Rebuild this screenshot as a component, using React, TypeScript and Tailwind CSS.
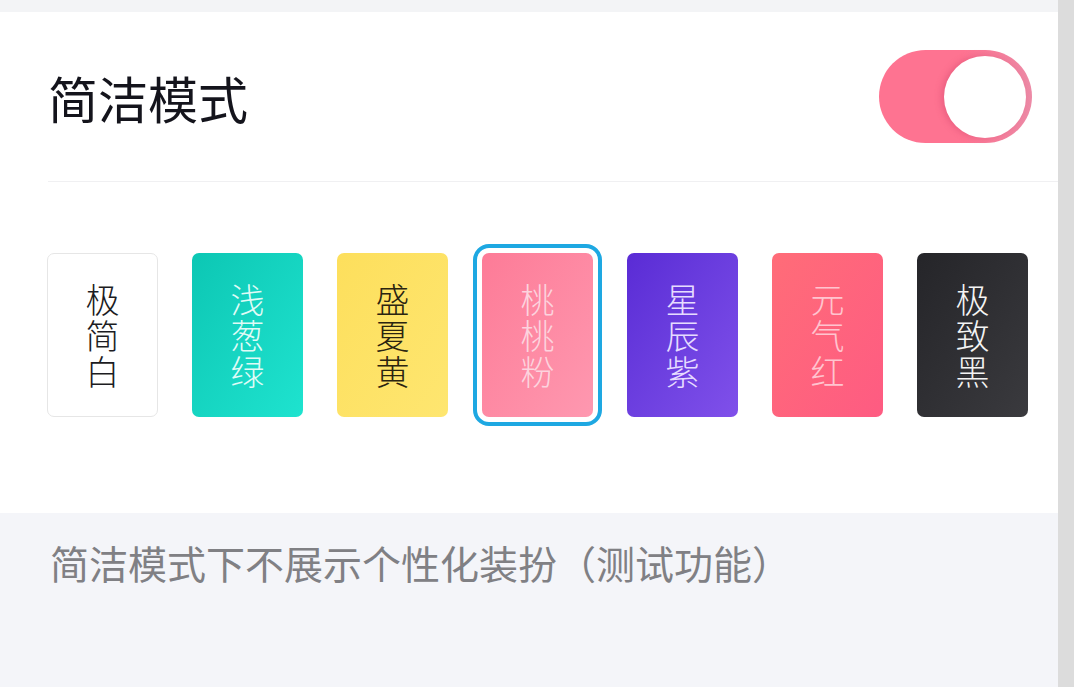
const themes = [
  { name: '极简白', card: 'bg-white border border-[#e6e6e6]', text: 'text-[#1c1c22]' },
  { name: '浅葱绿', card: 'bg-gradient-to-br from-[#0cc7b4] to-[#1ee3cf]', text: 'text-[#dffbf6]' },
  { name: '盛夏黄', card: 'bg-gradient-to-br from-[#fddf5c] to-[#fee670]', text: 'text-[#2a2410]' },
  { name: '桃桃粉', card: 'bg-gradient-to-br from-[#fd7b97] to-[#fe98b0]', text: 'text-[#fcd3de]', selected: true },
  { name: '星辰紫', card: 'bg-gradient-to-br from-[#5a2bd5] to-[#8050ea]', text: 'text-[#e6dcff]' },
  { name: '元气红', card: 'bg-gradient-to-br from-[#ff6c78] to-[#fe5b82]', text: 'text-[#ffc4cf]' },
  { name: '极致黑', card: 'bg-gradient-to-br from-[#252529] to-[#3a3a3e]', text: 'text-[#f4f4f4]' },
]

export default function App() {
  return (
    <div className="flex h-[687px] w-full overflow-hidden bg-white [font-family:'Noto_Sans_CJK_SC','Noto_Sans',sans-serif]">
      <div className="flex flex-1 flex-col">
        <div className="h-3 bg-[#f3f4f6]" />
        <div className="h-[501px] bg-white">
          <div className="ml-12 flex h-[170px] items-center justify-between border-b border-[#f0f0f2] pr-[26px]">
            <h1 className="text-[50px] leading-none font-normal text-[#14141c]">简洁模式</h1>
            <button className="flex h-[93px] w-[153px] items-center justify-end rounded-full bg-[linear-gradient(90deg,#fe7391_55%,#ec8aa6)] pr-[6px]">
              <span className="h-[82px] w-[82px] rounded-full bg-white shadow-[-3px_0_6px_rgba(200,60,100,0.35)]" />
            </button>
          </div>
          <div className="flex gap-[34px] pt-[71px] pl-[47px]">
            {themes.map((t) => (
              <div
                key={t.name}
                className={`flex h-[164px] w-[111px] items-center justify-center rounded-[7px] ${t.card} ${
                  t.selected ? 'outline-4 outline-offset-[5px] outline-[#1ea8e2]' : ''
                }`}
              >
                <div className={`flex flex-col items-center text-[34px] leading-[36px] font-light ${t.text}`}>
                  {t.name.split('').map((c, i) => (
                    <span key={i}>{c}</span>
                  ))}
                </div>
              </div>
            ))}
          </div>
        </div>
        <div className="flex-1 bg-[#f4f5f9] pt-[30px] pl-[50px]">
          <p className="text-[39px] leading-none text-[#808084]">简洁模式下不展示个性化装扮（测试功能）</p>
        </div>
      </div>
      <div className="w-4 bg-[#dcdcdc]" />
      <div className="w-[6px] bg-white" />
    </div>
  )
}
